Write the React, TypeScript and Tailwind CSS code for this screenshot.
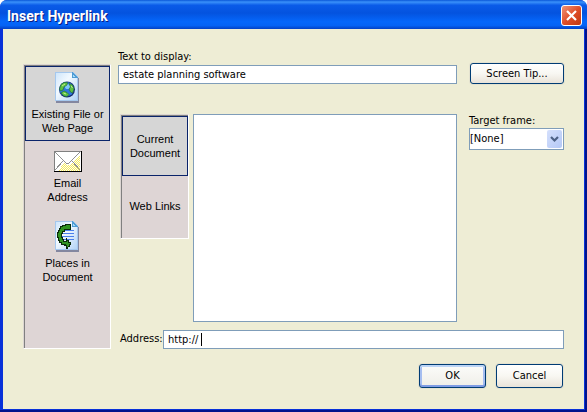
import React, { useState } from 'react';

const field =
  'block w-full border border-[#7f9db9] bg-white px-[4px] text-[11px] leading-[17px] outline-none';
const face = 'bg-linear-to-b from-white via-[#f8f7f2] to-[#e9e3d9]';
const pushButton =
  'rounded-[3px] border border-[#003c74] text-center text-[11px] leading-[14px] shadow-[0_0_0_1px_#e4e2d0]';

function PageSheet({ children }: { children: React.ReactNode }) {
  return (
    <svg width="25" height="31" viewBox="0 0 25 31" shapeRendering="crispEdges" aria-hidden="true">
      <defs>
        <linearGradient id="sheet" x1="0" y1="0" x2="1" y2="1">
          <stop offset="0" stopColor="#cfe6fb" />
          <stop offset="0.4" stopColor="#f2f9ff" />
          <stop offset="1" stopColor="#b4d4f6" />
        </linearGradient>
      </defs>
      <path d="M1 1H18L24 6V31H1Z" fill="#8387a0" />
      <path d="M0 0H18L23 5V29H0Z" fill="#a5c8ee" />
      <path d="M1 1H17V6H22V28H1Z" fill="url(#sheet)" />
      <path d="M17 0L23 6H17Z" fill="#4f9cd4" />
      <path d="M18 3L20 5H18Z" fill="#a8dcf8" />
      {children}
    </svg>
  );
}

function WebPageIcon() {
  return (
    <PageSheet>
      <g shapeRendering="auto">
        <circle cx="12" cy="17.5" r="8" fill="#162f72" />
        <circle cx="11.6" cy="17.1" r="7.2" fill="#2e78dc" />
        <ellipse cx="12.5" cy="14.5" rx="2.6" ry="2.6" fill="#7cc6fa" />
        <path d="M4.5 17L6 12.5L9 10.5L12.5 10.5L12 13L9 15L8 18L5.5 19Z" fill="#5cc044" stroke="#1d6a2c" strokeWidth="0.6" />
        <path d="M14 11.5L17.5 13L19 17L17.5 21L15.5 20L14 17L15.5 15Z" fill="#5cc044" stroke="#1d6a2c" strokeWidth="0.6" />
        <path d="M6 21L9 19L12 20.5L14 22.5L12 24.5L9 24Z" fill="#5cc044" stroke="#1d6a2c" strokeWidth="0.6" />
        <path d="M7 14L10 12M16 14L17.5 16M8.5 21L11 22" stroke="#c5ed8b" />
      </g>
    </PageSheet>
  );
}

function PlacesIcon() {
  return (
    <PageSheet>
      <path d="M5 9.5H19M5 12.5H19M5 15.5H19M8 18.5H19" stroke="#4a80ec" />
      <path
        d="M16 3H10V4H7V5H5V7H4V9H3V11H2V17H3V20H4V22H6V24H9V25H11V28H13V26H15V24H16V21H14V19H12V17H11V20H9V18H8V16H7V13H8V11H10V9H16Z"
        fill="#0a2a0a"
      />
      <path
        d="M15 4H11V5H8V6H6V8H5V10H4V12H3V16H4V19H5V21H7V23H11V24H12V26H13V25H14V23H15V22H13V20H12V21H8V19H7V17H6V12H7V10H9V8H15Z"
        fill="#2f9320"
      />
    </PageSheet>
  );
}

function EnvelopeIcon() {
  return (
    <svg width="28" height="21" viewBox="0 0 28 21" shapeRendering="crispEdges" aria-hidden="true">
      <defs>
        <pattern id="dither" width="2" height="2" patternUnits="userSpaceOnUse">
          <rect width="2" height="2" fill="#fffef0" />
          <rect width="1" height="1" fill="#f4ea60" />
          <rect x="1" y="1" width="1" height="1" fill="#f4ea60" />
        </pattern>
      </defs>
      <rect width="28" height="21" fill="#000" />
      <rect width="27" height="20" fill="#808080" />
      <rect x="1" y="1" width="26" height="19" fill="#fff" />
      <path d="M26 4V20H4L10 12L13 14H16Z" fill="url(#dither)" />
      <path d="M1 1L12 12H15L26 1M1 19L9 10M26 19L18 10" stroke="#909090" fill="none" />
    </svg>
  );
}

const places = [
  { id: 'file', lines: ['Existing File or', 'Web Page'], icon: <WebPageIcon />, box: 'h-[75px] pt-[5px]', gap: 'mt-[4px]' },
  { id: 'email', lines: ['Email', 'Address'], icon: <EnvelopeIcon />, box: 'h-[70px] pt-[9px]', gap: 'mt-[4px]' },
  { id: 'places', lines: ['Places in', 'Document'], icon: <PlacesIcon />, box: 'h-[78px] pt-[9px]', gap: 'mt-[4px]' },
];

const sources = [
  { id: 'current', lines: ['Current', 'Document'] },
  { id: 'links', lines: ['Web Links'] },
];

const well = 'border border-t-[#dcd6d2] border-l-[#dcd6d2] border-r-white border-b-white';
const wellInner = 'border-t border-l border-[#808080] bg-[#ded5d5]';

export default function App() {
  const [place, setPlace] = useState('file');
  const [source, setSource] = useState('current');

  return (
    <div className="flex min-h-screen flex-col overflow-hidden rounded-t-[7px] bg-[#0831d9] font-['DejaVu_Sans_Condensed',sans-serif] text-[11px] text-black">
      <header className="flex h-[29px] items-center justify-between bg-[linear-gradient(to_bottom,#0a57d8_0%,#3a91fa_7%,#0a5be8_18%,#0453df_45%,#0567fb_75%,#0563f5_88%,#0341c4_100%)] pr-[5px] pl-[7px]">
        <h1 className="pt-[3px] font-['Roboto',sans-serif] text-[14px] leading-[18px] font-bold text-white [text-shadow:1px_1px_0_#0a1e83]">
          Insert Hyperlink
        </h1>
        <button
          type="button"
          aria-label="Close"
          className="mt-[2px] flex size-[21px] items-center justify-center rounded-[3px] border border-white bg-linear-to-br from-[#ee9275] via-[#df4e28] to-[#c2380f]"
        >
          <svg width="13" height="13" viewBox="0 0 13 13" aria-hidden="true">
            <path d="M2 2L11 11M11 2L2 11" stroke="#fff" strokeWidth="2.2" />
          </svg>
        </button>
      </header>

      <div className="flex flex-1 flex-col border-r-2 border-b-2 border-[#00138c] pr-[1px] pb-[1px] pl-[3px]">
        <main className="flex-1 bg-[#eeedd5] px-[20px] pt-[20px] pb-[20px]">
          <div className="flex gap-[7px]">
            <nav className={`mt-[15px] w-[88px] shrink-0 ${well}`}>
              <div className={`h-full ${wellInner}`}>
                {places.map((p) => (
                  <button
                    key={p.id}
                    type="button"
                    onClick={() => setPlace(p.id)}
                    className={`flex w-full flex-col items-center border font-['Liberation_Sans',sans-serif] leading-[14px] ${p.box} ${
                      place === p.id ? 'border-[#0a246a] bg-[#d6d6d6]' : 'border-transparent'
                    }`}
                  >
                    {p.icon}
                    <span className={`whitespace-nowrap ${p.gap}`}>
                      {p.lines[0]}
                      <br />
                      {p.lines[1]}
                    </span>
                  </button>
                ))}
              </div>
            </nav>

            <div className="flex min-w-0 flex-1 flex-col">
              <div className="flex items-end gap-[13px]">
                <div className="min-w-0 flex-1">
                  <label htmlFor="display" className="block leading-[16px]">
                    Text to display:
                  </label>
                  <input id="display" defaultValue="estate planning software" className={field} />
                </div>
                <button type="button" className={`h-[21px] w-[94px] ${pushButton} ${face}`}>
                  Screen Tip...
                </button>
              </div>

              <div className="mt-[30px] flex gap-[12px]">
                <div className="flex min-w-0 flex-1 items-start gap-[4px] pl-[2px]">
                  <div className={`w-[69px] shrink-0 ${well}`}>
                    <div className={`pb-[2px] ${wellInner}`}>
                      {sources.map((s) => (
                        <button
                          key={s.id}
                          type="button"
                          onClick={() => setSource(s.id)}
                          className={`block h-[60px] w-full border font-['Liberation_Sans',sans-serif] leading-[14px] ${
                            source === s.id ? 'border-[#0a246a] bg-[#d6d6d6]' : 'border-transparent'
                          }`}
                        >
                          {s.lines.map((line) => (
                            <span key={line} className="block">
                              {line}
                            </span>
                          ))}
                        </button>
                      ))}
                    </div>
                  </div>
                  <div role="listbox" aria-label="Documents" className="h-[208px] flex-1 border border-[#7f9db9] bg-white" />
                </div>

                <div className="w-[95px]">
                  <label htmlFor="frame" className="block leading-[14px]">
                    Target frame:
                  </label>
                  <div className="relative">
                    <select
                      id="frame"
                      className="block h-[22px] w-full appearance-none border border-[#7f9db9] bg-white text-[11px] outline-none"
                    >
                      <option>[None]</option>
                    </select>
                    <span className="pointer-events-none absolute top-[2px] right-[2px] flex h-[18px] w-[15px] items-center justify-center rounded-[2px] bg-linear-to-br from-[#d5e0fc] to-[#b4c8f6]">
                      <svg width="9" height="7" viewBox="0 0 9 7" aria-hidden="true">
                        <path d="M1 1L4.5 4.5L8 1" stroke="#4d6185" strokeWidth="2.2" fill="none" />
                      </svg>
                    </span>
                  </div>
                </div>
              </div>

              <div className="mt-[8px] flex items-center pl-[2px]">
                <label htmlFor="address" className="w-[43px] shrink-0 whitespace-nowrap">
                  Address:
                </label>
                <div className="relative flex-1">
                  <input id="address" defaultValue="http://" className={field} />
                  <span className="pointer-events-none absolute top-[3px] left-[38px] h-[13px] w-px bg-black" />
                </div>
              </div>
            </div>
          </div>

          <div className="mt-[15px] flex justify-end gap-[10px] pr-[1px]">
            <button
              type="button"
              className="h-[24px] w-[67px] rounded-[3px] border border-[#003c74] bg-linear-to-b from-[#fcfcfa] to-[#efeee8] text-center text-[11px] leading-[14px] shadow-[0_0_0_1px_#e4e2d0,inset_0_2px_0_#bcd4f6,inset_0_-2px_0_#7f9ce4,inset_2px_0_0_#a5bdf0,inset_-2px_0_0_#a5bdf0]"
            >
              OK
            </button>
            <button type="button" className={`h-[24px] w-[67px] ${pushButton} ${face}`}>
              Cancel
            </button>
          </div>
        </main>
      </div>
    </div>
  );
}
